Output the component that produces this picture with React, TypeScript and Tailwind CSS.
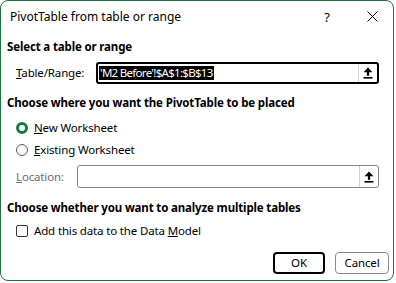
import React from "react";

function UploadIcon() {
  return (
    <svg width="10" height="12" viewBox="0 0 10 12" className="block">
      <polygon points="5,0.5 9.5,5.2 0.5,5.2" fill="#000" />
      <rect x="3.9" y="5" width="2.2" height="3.8" fill="#000" />
      <rect x="0.5" y="10" width="9" height="1.6" fill="#000" />
    </svg>
  );
}

function CloseIcon() {
  return (
    <svg width="11" height="11" viewBox="0 0 11 11" className="block">
      <path d="M0.5 0.5 L10.5 10.5 M10.5 0.5 L0.5 10.5" stroke="#000" strokeWidth="1" />
    </svg>
  );
}

function Radio({ checked }: { checked?: boolean }) {
  return checked ? (
    <span className="block h-[12px] w-[12px] shrink-0 rounded-full border-[3px] border-[#107c41] bg-white" />
  ) : (
    <span className="block h-[12px] w-[12px] shrink-0 rounded-full border border-[#5c5c5c] bg-white" />
  );
}

function RefInput({
  children,
  disabled,
}: {
  children?: React.ReactNode;
  disabled?: boolean;
}) {
  return (
    <div
      className={
        disabled
          ? "flex h-[23px] flex-1 items-stretch rounded-[3px] border border-[#8a8a8a] bg-white"
          : "flex h-[22px] flex-1 items-stretch rounded-[3px] border-2 border-black bg-white"
      }
    >
      <div className="flex min-w-0 flex-1 items-center pl-[1px]">{children}</div>
      <div className="flex w-[19px] items-center justify-center border-l border-[#d4d4d4]">
        <UploadIcon />
      </div>
    </div>
  );
}

export default function App() {
  return (
    <div className="h-[283px] w-[396px] bg-white">
      <div className="flex h-[281px] w-[394px] flex-col rounded-[8px] border border-[#1e7145] bg-white font-['Noto_Sans',sans-serif] text-[11.5px] leading-[16px] tracking-[-0.15px] text-black">
        {/* title bar */}
        <div className="flex h-[31px] shrink-0 items-center pl-[9px] pr-[11px] text-[12px] tracking-normal">
          <span className="flex-1">PivotTable from table or range</span>
          <span className="w-[20px] text-center text-[13px]">?</span>
          <span className="ml-[25px] flex w-[20px] justify-center">
            <CloseIcon />
          </span>
        </div>

        <div className="flex flex-col pl-[6px] pr-[14px]">
          <div className="mt-[7px] font-bold">Select a table or range</div>

          <div className="mt-[7px] flex items-center">
            <span className="w-[89px] shrink-0 pl-[9px]">
              <span className="underline">T</span>able/Range:
            </span>
            <RefInput>
              <span className="bg-black px-[1px] leading-[14px] tracking-[-0.7px] text-white">'M2 Before'!$A$1:$B$13</span>
            </RefInput>
          </div>

          <div className="mt-[11px] font-bold">Choose where you want the PivotTable to be placed</div>

          <label className="mt-[8px] flex h-[18px] items-center gap-[6px] pl-[9px]">
            <Radio checked />
            <span>
              <span className="underline">N</span>ew Worksheet
            </span>
          </label>
          <label className="mt-[4px] flex h-[18px] items-center gap-[6px] pl-[9px]">
            <Radio />
            <span>
              <span className="underline">E</span>xisting Worksheet
            </span>
          </label>

          <div className="mt-[6px] flex items-center">
            <span className="w-[70px] shrink-0 pl-[9px] text-[#6d6d6d]">
              <span className="underline">L</span>ocation:
            </span>
            <RefInput disabled />
          </div>

          <div className="mt-[12px] font-bold">Choose whether you want to analyze multiple tables</div>

          <label className="mt-[6px] flex h-[18px] items-center gap-[6px] pl-[9px]">
            <span className="block h-[12px] w-[12px] shrink-0 rounded-[2px] border border-[#333]" />
            <span>
              Add this data to the Data <span className="underline">M</span>odel
            </span>
          </label>
        </div>

        <div className="mt-[12px] flex justify-end gap-[10px] pr-[4px]">
          <button className="flex h-[22px] w-[52px] items-center justify-center rounded-[4px] border-2 border-black bg-white">
            OK
          </button>
          <button className="flex h-[22px] w-[54px] items-center justify-center rounded-[4px] border border-[#8a8a8a] bg-white">
            Cancel
          </button>
        </div>
      </div>
    </div>
  );
}
